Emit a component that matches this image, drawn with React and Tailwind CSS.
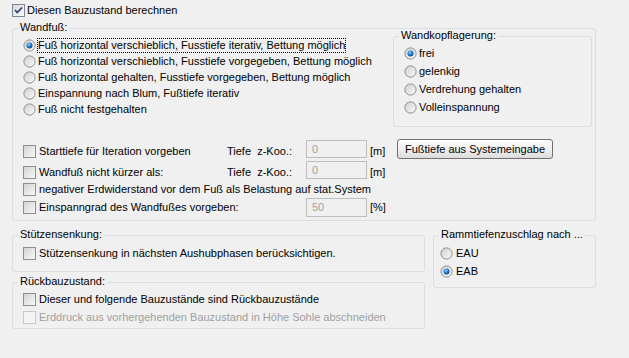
import React from "react";

function Check({ checked, disabled }) {
  const cls = disabled
    ? "border-[#c9c9c9] bg-[#f4f4f4]"
    : checked
    ? "border-[#7b8699] bg-linear-to-br from-[#d8d8d8] to-[#fbfbfb]"
    : "border-[#8e8e8e] bg-linear-to-br from-[#d3d3d3] to-[#f9f9f9]";
  return (
    <span className={`relative flex items-center justify-center w-[13px] h-[13px] shrink-0 border ${cls}`}>
      {checked && (
        <svg width="11" height="11" viewBox="0 0 11 11">
          <path d="M2 5 L4.3 7.5 L9 2.5" fill="none" stroke="#2c3c6c" strokeWidth="1.7" />
        </svg>
      )}
    </span>
  );
}

function Radio({ checked }) {
  return (
    <svg width="13" height="13" viewBox="0 0 13 13" className="shrink-0">
      <defs>
        <linearGradient id="rbg" x1="0" y1="0" x2="1" y2="1">
          <stop offset="0" stopColor="#cfcfcf" />
          <stop offset="1" stopColor="#fbfbfb" />
        </linearGradient>
        <radialGradient id="rdot" cx="0.4" cy="0.35" r="0.65">
          <stop offset="0" stopColor="#a8dcff" />
          <stop offset="0.45" stopColor="#2b8ae0" />
          <stop offset="1" stopColor="#0a4785" />
        </radialGradient>
      </defs>
      <circle cx="6.5" cy="6.5" r="5.6" fill="url(#rbg)" stroke="#8d8d8d" />
      {checked && <circle cx="6.5" cy="6.5" r="3" fill="url(#rdot)" />}
    </svg>
  );
}

function Group({ label, className, children }) {
  return (
    <div className={`relative border border-[#d5dfe5] rounded-[3px] ${className}`}>
      <span className="absolute left-[5px] -top-[8px] px-[2px] bg-[#f0f0f0] leading-[13px] whitespace-nowrap">
        {label}
      </span>
      {children}
    </div>
  );
}

function Input({ value, className }) {
  return (
    <div className={`w-[61px] border border-[#bdbdbd] bg-[#f0f0f0] text-[#a0a0a0] pl-[5px] flex items-center ${className}`}>
      {value}
    </div>
  );
}

function RadioRow({ checked, label, focus, h, gap }) {
  return (
    <div className={`flex items-center ${h}`}>
      <Radio checked={checked} />
      {focus ? (
        <span className="ml-[1px] border border-dotted border-black leading-[13px] whitespace-nowrap">{label}</span>
      ) : (
        <span className={`${gap} whitespace-nowrap`}>{label}</span>
      )}
    </div>
  );
}

function CheckLabel({ label, checked, disabled, className }) {
  return (
    <div className={`flex items-center gap-[3px] ${className}`}>
      <Check checked={checked} disabled={disabled} />
      <span className={`whitespace-nowrap ${disabled ? "text-[#a0a0a0]" : ""}`}>{label}</span>
    </div>
  );
}

export default function App() {
  return (
    <div className="w-[629px] h-[358px] bg-[#f0f0f0] text-black text-[11px] leading-[13px] font-['Liberation_Sans',Arial,sans-serif] pl-[12px] pt-[4px] overflow-hidden">
      <div className="flex items-center gap-[2px] h-[13px]">
        <Check checked />
        <span>Diesen Bauzustand berechnen</span>
      </div>

      <Group label="Wandfuß:" className="mt-[11px] w-[584px] h-[193px]">
        <div className="flex items-start pl-[10px]">
          <div className="flex flex-col pt-[8px]">
            <RadioRow h="h-[16px]" gap="ml-[2px]" checked focus label="Fuß horizontal verschieblich, Fusstiefe iterativ, Bettung möglich" />
            <RadioRow h="h-[16px]" gap="ml-[2px]" label="Fuß horizontal verschieblich, Fusstiefe vorgegeben, Bettung möglich" />
            <RadioRow h="h-[16px]" gap="ml-[2px]" label="Fuß horizontal gehalten, Fusstiefe vorgegeben, Bettung möglich" />
            <RadioRow h="h-[16px]" gap="ml-[2px]" label="Einspannung nach Blum, Fußtiefe iterativ" />
            <RadioRow h="h-[16px]" gap="ml-[2px]" label="Fuß nicht festgehalten" />
          </div>
          <Group label="Wandkopflagerung:" className="ml-auto mr-[3px] mt-[7px] w-[199px] h-[91px] pt-[7px] pl-[10px]">
            <RadioRow h="h-[18px]" gap="ml-[2px]" checked label="frei" />
            <RadioRow h="h-[18px]" gap="ml-[2px]" label="gelenkig" />
            <RadioRow h="h-[18px]" gap="ml-[2px]" label="Verdrehung gehalten" />
            <RadioRow h="h-[18px]" gap="ml-[2px]" label="Volleinspannung" />
          </Group>
        </div>

        <div className="flex items-start h-[21px] pl-[10px] mt-[12px]">
          <CheckLabel label="Starttiefe für Iteration vorgeben" className="w-[204px] h-[13px] mt-[6px]" />
          <span className="w-[79px] mt-[6px] whitespace-pre">Tiefe  z-Koo.:</span>
          <Input value="0" className="mt-[1px] h-[18px]" />
          <span className="ml-[3px] w-[27px] mt-[6px]">[m]</span>
          <div className="w-[156px] h-[20px] border border-[#707070] rounded-[3px] bg-linear-to-b from-[#fdfdfd] via-[#f0f0f0] to-[#dcdcdc] flex items-center justify-center">
            Fußtiefe aus Systemeingabe
          </div>
        </div>
        <div className="flex items-start h-[21px] pl-[10px]">
          <CheckLabel label="Wandfuß nicht kürzer als:" className="w-[204px] h-[13px] mt-[6px]" />
          <span className="w-[79px] mt-[6px] whitespace-pre">Tiefe  z-Koo.:</span>
          <Input value="0" className="mt-[1px] h-[18px]" />
          <span className="ml-[3px] w-[27px] mt-[6px]">[m]</span>
        </div>
        <CheckLabel label="negativer Erdwiderstand vor dem Fuß als Belastung auf stat.System" className="h-[17px] pl-[10px]" />
        <div className="flex items-center h-[19px] pl-[10px]">
          <CheckLabel label="Einspanngrad des Wandfußes vorgeben:" className="w-[283px]" />
          <Input value="50" className="h-[19px]" />
          <span className="ml-[3px]">[%]</span>
        </div>
      </Group>

      <div className="flex items-start mt-[14px]">
        <div className="flex flex-col w-[413px]">
          <Group label="Stützensenkung:" className="h-[37px] pt-[11px] pl-[10px]">
            <CheckLabel label="Stützensenkung in nächsten Aushubphasen berücksichtigen." className="h-[13px]" />
          </Group>
          <Group label="Rückbauzustand:" className="mt-[10px] h-[47px] pt-[7px] pl-[10px]">
            <CheckLabel label="Dieser und folgende Bauzustände sind Rückbauzustände" className="h-[18px]" />
            <CheckLabel label="Erddruck aus vorhergehenden Bauzustand in Höhe Sohle abschneiden" disabled className="h-[18px]" />
          </Group>
        </div>
        <Group label="Rammtiefenzuschlag nach ..." className="ml-[8px] w-[163px] h-[53px] pt-[8px] pl-[6px]">
          <RadioRow h="h-[18px]" gap="ml-[3px]" label="EAU" />
          <RadioRow h="h-[18px]" gap="ml-[3px]" checked label="EAB" />
        </Group>
      </div>
    </div>
  );
}
